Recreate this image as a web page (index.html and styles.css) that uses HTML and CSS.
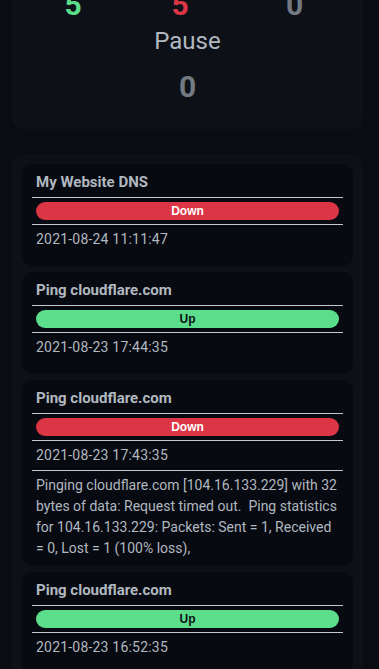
FILE: index.html
```html
<!DOCTYPE html>
<html lang="en">
  <head>
    <meta charset="UTF-8" />
    <meta name="viewport" content="width=device-width, initial-scale=1.0" />
    <title>Dashboard</title>
    <link rel="stylesheet" href="styles.css">
  </head>
  <body>
    <div class="page">
      <!-- quick stats -->
      <div class="stats">
        <div class="stat">
          <h3>Up</h3>
          <span class="num up">5</span>
        </div>
        <div class="stat">
          <h3>Down</h3>
          <span class="num down">5</span>
        </div>
        <div class="stat">
          <h3>Unknown</h3>
          <span class="num idle">0</span>
        </div>
        <div class="stat wide">
          <h3>Pause</h3>
          <span class="num idle">0</span>
        </div>
      </div>

      <!-- important events -->
      <div class="events">
        <div class="event">
          <div class="event-name">My Website DNS</div>
          <div class="event-cell"><span class="badge down">Down</span></div>
          <div class="event-cell event-date">2021-08-24 11:11:47</div>
          <div class="event-cell event-msg"></div>
        </div>

        <div class="event">
          <div class="event-name">Ping cloudflare.com</div>
          <div class="event-cell"><span class="badge up">Up</span></div>
          <div class="event-cell event-date">2021-08-23 17:44:35</div>
          <div class="event-cell event-msg"></div>
        </div>

        <div class="event">
          <div class="event-name">Ping cloudflare.com</div>
          <div class="event-cell"><span class="badge down">Down</span></div>
          <div class="event-cell event-date">2021-08-23 17:43:35</div>
          <div class="event-cell event-msg">Pinging cloudflare.com [104.16.133.229] with 32 bytes of data: Request timed out.&nbsp; Ping statistics for 104.16.133.229: Packets: Sent = 1, Received = 0, Lost = 1 (100% loss),</div>
        </div>

        <div class="event">
          <div class="event-name">Ping cloudflare.com</div>
          <div class="event-cell"><span class="badge up">Up</span></div>
          <div class="event-cell event-date">2021-08-23 16:52:35</div>
          <div class="event-cell event-msg"></div>
        </div>
      </div>
    </div>
  </body>
</html>
```

FILE: styles.css
```css
body {
  margin: 0;
  background-color: #090c10;
  color: #b1b8c0;
  font-family: Roboto, "Noto Sans", sans-serif;
  font-size: 14px;
  line-height: 1.5;
}

.page {
  padding: 0 16px 0 12px;
}

.stats,
.events {
  background-color: #0d1117;
  border-radius: 10px;
}

/* quick stats */
.stats {
  margin-top: -75px;
  padding: 20px 10px;
  display: grid;
  grid-template-columns: 102fr 112fr 117fr;
  text-align: center;
}

.stat h3 {
  margin: 0 0 8px;
  font-size: 24px;
  font-weight: 400;
  line-height: 1.2;
}

.stat.wide {
  grid-column: 1 / -1;
}

.num {
  display: block;
  font-size: 30px;
  font-weight: bold;
  line-height: 1.5;
}

.num.up {
  color: #5cdd8b;
}

.num.down {
  color: #dc3545;
}

.num.idle {
  color: #737a81;
}

/* events list */
.events {
  margin-top: 25px;
  padding: 10px;
}

.event {
  background-color: #070a10;
  border-radius: 10px;
  padding: 4px 10px 3px;
  margin-bottom: 6px;
}

.event-name,
.event-cell {
  padding: 4px;
}

.event-name {
  font-size: 15px;
  font-weight: bold;
  line-height: 21px;
}

.event-cell {
  border-top: 1px solid #c4c8cc;
}

.event-date {
  letter-spacing: 0.2px;
}

.event-msg:empty {
  border-top-color: transparent;
}

.badge {
  display: block;
  height: 18px;
  border-radius: 9px;
  font-family: "Liberation Sans", Arial, sans-serif;
  font-size: 12px;
  font-weight: bold;
  line-height: 18px;
  text-align: center;
}

.badge.down {
  background-color: #dc3545;
  color: #fff;
}

.badge.up {
  background-color: #5cdd8b;
  color: #0d1117;
}
```
